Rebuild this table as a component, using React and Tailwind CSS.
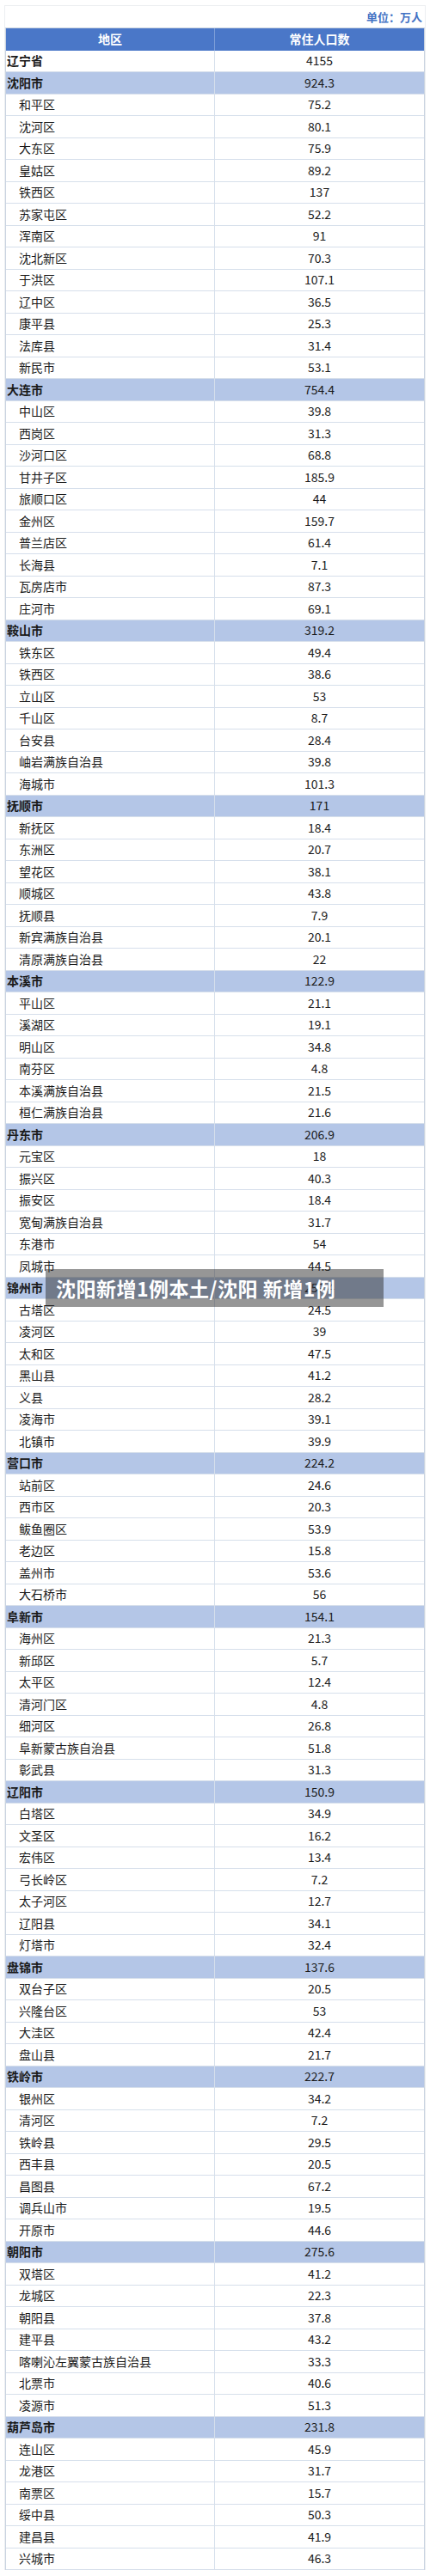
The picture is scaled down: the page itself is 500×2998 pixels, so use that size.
import React from "react";

const groups = [
  ["沈阳市", "924.3", [["和平区","75.2"],["沈河区","80.1"],["大东区","75.9"],["皇姑区","89.2"],["铁西区","137"],["苏家屯区","52.2"],["浑南区","91"],["沈北新区","70.3"],["于洪区","107.1"],["辽中区","36.5"],["康平县","25.3"],["法库县","31.4"],["新民市","53.1"]]],
  ["大连市", "754.4", [["中山区","39.8"],["西岗区","31.3"],["沙河口区","68.8"],["甘井子区","185.9"],["旅顺口区","44"],["金州区","159.7"],["普兰店区","61.4"],["长海县","7.1"],["瓦房店市","87.3"],["庄河市","69.1"]]],
  ["鞍山市", "319.2", [["铁东区","49.4"],["铁西区","38.6"],["立山区","53"],["千山区","8.7"],["台安县","28.4"],["岫岩满族自治县","39.8"],["海城市","101.3"]]],
  ["抚顺市", "171", [["新抚区","18.4"],["东洲区","20.7"],["望花区","38.1"],["顺城区","43.8"],["抚顺县","7.9"],["新宾满族自治县","20.1"],["清原满族自治县","22"]]],
  ["本溪市", "122.9", [["平山区","21.1"],["溪湖区","19.1"],["明山区","34.8"],["南芬区","4.8"],["本溪满族自治县","21.5"],["桓仁满族自治县","21.6"]]],
  ["丹东市", "206.9", [["元宝区","18"],["振兴区","40.3"],["振安区","18.4"],["宽甸满族自治县","31.7"],["东港市","54"],["凤城市","44.5"]]],
  ["锦州市", "259.4", [["古塔区","24.5"],["凌河区","39"],["太和区","47.5"],["黑山县","41.2"],["义县","28.2"],["凌海市","39.1"],["北镇市","39.9"]]],
  ["营口市", "224.2", [["站前区","24.6"],["西市区","20.3"],["鲅鱼圈区","53.9"],["老边区","15.8"],["盖州市","53.6"],["大石桥市","56"]]],
  ["阜新市", "154.1", [["海州区","21.3"],["新邱区","5.7"],["太平区","12.4"],["清河门区","4.8"],["细河区","26.8"],["阜新蒙古族自治县","51.8"],["彰武县","31.3"]]],
  ["辽阳市", "150.9", [["白塔区","34.9"],["文圣区","16.2"],["宏伟区","13.4"],["弓长岭区","7.2"],["太子河区","12.7"],["辽阳县","34.1"],["灯塔市","32.4"]]],
  ["盘锦市", "137.6", [["双台子区","20.5"],["兴隆台区","53"],["大洼区","42.4"],["盘山县","21.7"]]],
  ["铁岭市", "222.7", [["银州区","34.2"],["清河区","7.2"],["铁岭县","29.5"],["西丰县","20.5"],["昌图县","67.2"],["调兵山市","19.5"],["开原市","44.6"]]],
  ["朝阳市", "275.6", [["双塔区","41.2"],["龙城区","22.3"],["朝阳县","37.8"],["建平县","43.2"],["喀喇沁左翼蒙古族自治县","33.3"],["北票市","40.6"],["凌源市","51.3"]]],
  ["葫芦岛市", "231.8", [["连山区","45.9"],["龙港区","31.7"],["南票区","15.7"],["绥中县","50.3"],["建昌县","41.9"],["兴城市","46.3"]]],
];

function Row({ name, value, kind }) {
  const bold = kind === "city" || kind === "prov";
  const bg = kind === "city" ? "bg-[#b4c6e7]" : "bg-white";
  return (
    <div className={`flex h-[25.5px] border-b border-[#d6dfeb] ${bg}`}>
      <div
        className={`w-[243px] shrink-0 flex items-center border-r border-[#d6dfeb] text-[14px] text-[#1a1a1a] ${
          bold ? "font-bold pl-[1px]" : "pl-[15px]"
        }`}
      >
        {name}
      </div>
      <div className="flex-1 flex items-center justify-center text-[14px] text-[#1a1a1a]">
        {value}
      </div>
    </div>
  );
}

export default function App() {
  return (
    <div
      className="w-[500px] h-[2998px] bg-white relative"
      style={{ fontFamily: '"Noto Sans CJK SC", "Noto Sans", sans-serif' }}
    >
      <div className="pt-[6px] px-[5px]">
        <div className="border-t border-l border-r border-[#eceef1]">
          <div className="h-[25px] flex items-center justify-end pr-[3px] text-[13px] font-bold text-[#4472c4]">
            单位：万人
          </div>
          <div className="border border-[#c9d3e0] border-b-0">
            <div className="flex h-[25.5px] bg-[#4a77c8] text-white font-bold text-[14px]">
              <div className="w-[243px] shrink-0 flex items-center justify-center border-r border-[#7e9fd8]">
                地区
              </div>
              <div className="flex-1 flex items-center justify-center">常住人口数</div>
            </div>
            <Row name="辽宁省" value="4155" kind="prov" />
            {groups.map(([city, v, ds]) => (
              <React.Fragment key={city}>
                <Row name={city} value={v} kind="city" />
                {ds.map(([n, val]) => (
                  <Row key={city + n} name={n} value={val} kind="dist" />
                ))}
              </React.Fragment>
            ))}
          </div>
        </div>
      </div>

      <div className="absolute left-[53px] top-[1477px] w-[393px] h-[44px] bg-[rgba(45,45,45,0.5)] flex items-center pl-[12px]">
        <span className="text-white font-bold text-[23px] leading-none tracking-[0.5px]">
          沈阳新增1例本土/沈阳 新增1例
        </span>
      </div>
    </div>
  );
}
